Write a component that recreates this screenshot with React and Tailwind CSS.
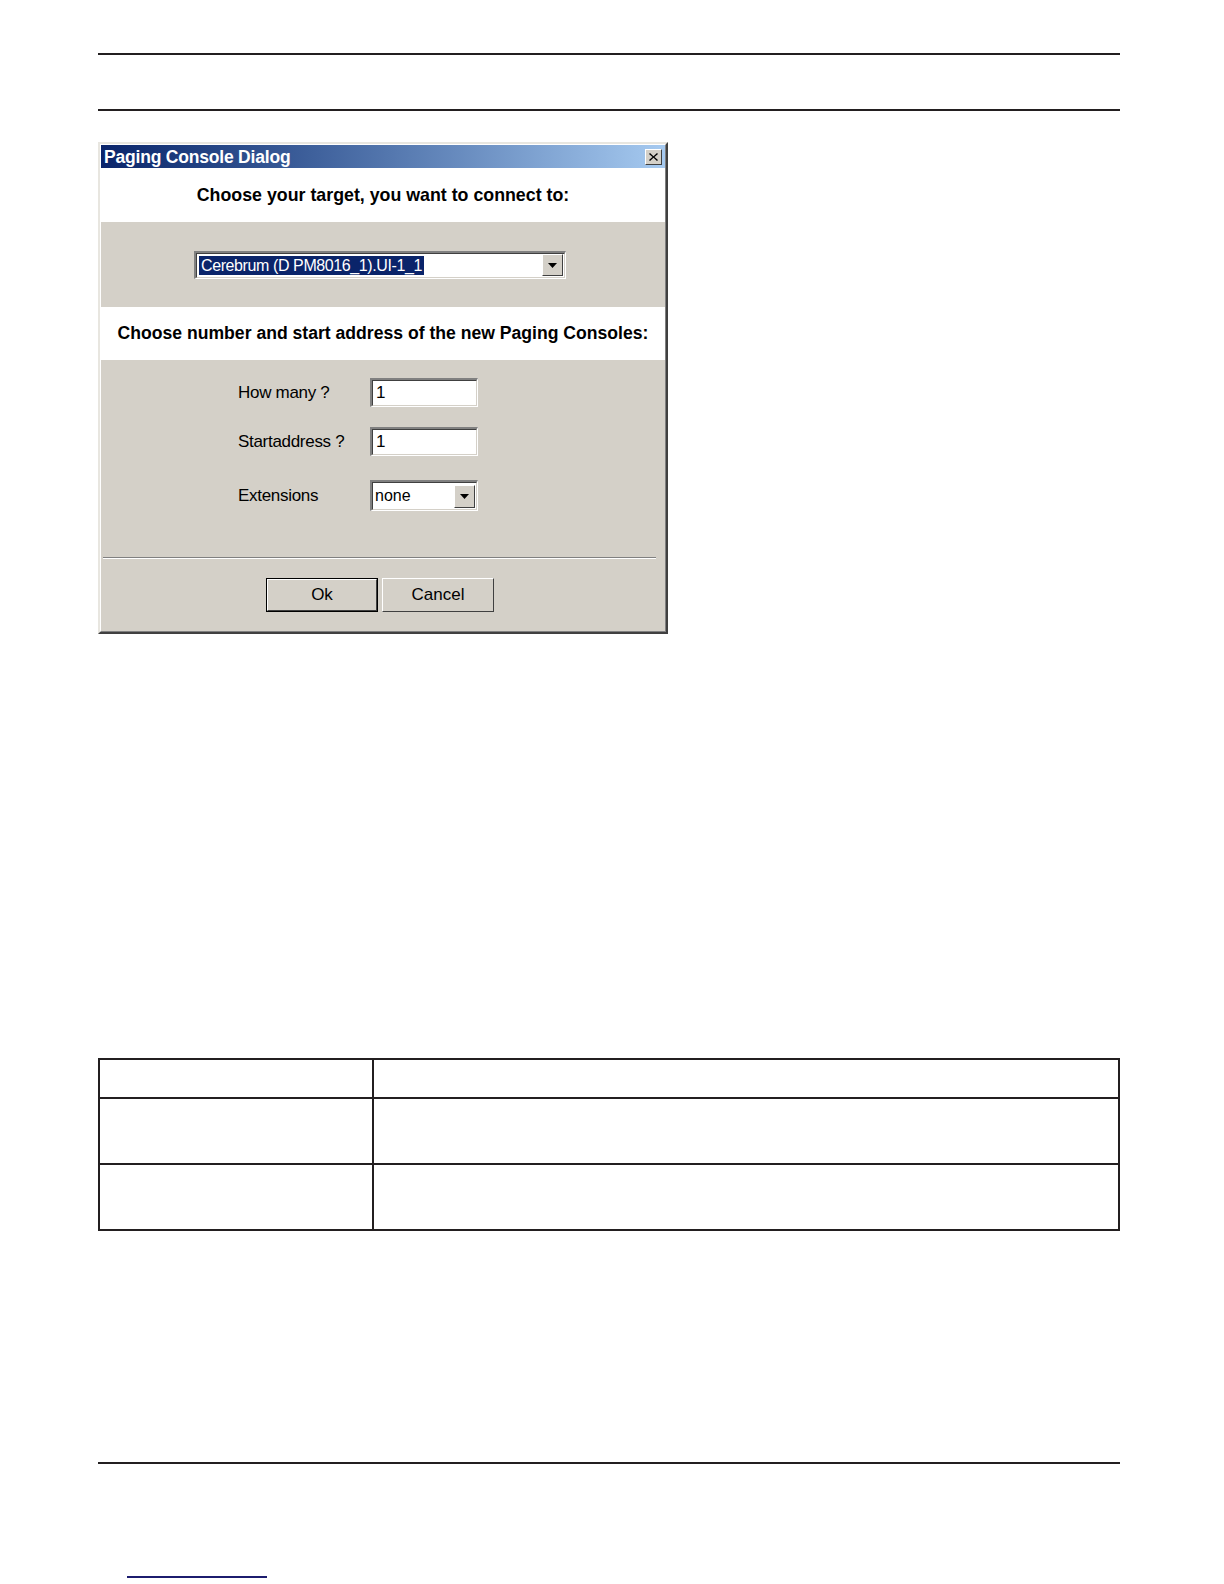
import React from "react";

const font = { fontFamily: '"Liberation Sans", Arial, sans-serif' };

function Field({ children, className = "" }) {
  // sunken win32 edit box
  return (
    <div className={`border-t-2 border-l-2 border-t-[#808080] border-l-[#808080] border-b border-r border-b-white border-r-white ${className}`}>
      <div className="h-full w-full border-t border-l border-t-[#404040] border-l-[#404040] border-b border-r border-b-[#d4d0c8] border-r-[#d4d0c8] bg-white">
        {children}
      </div>
    </div>
  );
}

function DropArrow() {
  return (
    <div className="flex h-full w-[21px] items-center justify-center border border-t-white border-l-white border-b-[#404040] border-r-[#404040] bg-[#d4d0c8]">
      <svg width="9" height="5" viewBox="0 0 9 5">
        <path d="M0 0h9L4.5 5z" fill="#000" />
      </svg>
    </div>
  );
}

function Button({ label, primary }) {
  return (
    <div className={`h-[34px] w-[112px] ${primary ? "border border-black" : ""}`}>
      <div className="flex h-full w-full items-center justify-center border border-t-white border-l-white border-b-[#404040] border-r-[#404040] bg-[#d4d0c8] text-[17px] text-black">
        {label}
      </div>
    </div>
  );
}

function Dialog() {
  return (
    <div className="w-[570px] h-[492px] overflow-hidden border-t-2 border-l-2 border-t-[#e8e6e0] border-l-[#e8e6e0] border-r-2 border-b-2 border-r-[#404040] border-b-[#404040] bg-[#d4d0c8]" style={font}>
      <div className="flex h-full flex-col border border-t-white border-l-white border-r-[#808080] border-b-[#808080]">
        <div className="flex h-[23px] items-center justify-between bg-gradient-to-r from-[#0a246a] to-[#a6caf0] pl-[3px] pr-[3px]">
          <span className="text-[17.5px] font-bold leading-[20px] text-white tracking-[-0.2px]">Paging Console Dialog</span>
          <div className="flex h-[16px] w-[17px] items-center justify-center border border-t-white border-l-white border-b-[#404040] border-r-[#404040] bg-[#d4d0c8]">
            <svg width="9" height="8" viewBox="0 0 9 8">
              <path d="M1 0l3.5 3.3L8 0l1 1-3.5 3 3.5 3-1 1-3.5-3.3L1 8 0 7l3.5-3L0 1z" fill="#000" />
            </svg>
          </div>
        </div>

        <div className="flex h-[54px] items-center justify-center bg-white text-[17.8px] font-bold text-black">
          Choose your target, you want to connect to:
        </div>

        <div className="flex h-[85px] items-center pl-[93px]">
          <Field className="h-[28px] w-[372px]">
            <div className="flex h-full items-center justify-between pl-[2px] pr-[1px]">
              <span className="bg-[#0a246a] px-[2px] text-[16px] leading-[19px] text-white tracking-[-0.4px]">Cerebrum (D PM8016_1).UI-1_1</span>
              <div className="h-[22px]"><DropArrow /></div>
            </div>
          </Field>
        </div>

        <div className="flex h-[53px] items-center justify-center bg-white text-[17.6px] font-bold text-black">
          Choose number and start address of the new Paging Consoles:
        </div>

        <div className="flex flex-1 flex-col">
          <div className="flex flex-col gap-[20px] pl-[137px] pt-[18px]">
            <div className="flex items-center">
              <span className="w-[132px] text-[17px] text-black tracking-[-0.3px]">How many ?</span>
              <Field className="h-[29px] w-[108px]">
                <div className="pl-[3px] text-[17px] leading-[24px] text-black">1</div>
              </Field>
            </div>
            <div className="flex items-center">
              <span className="w-[132px] text-[17px] text-black tracking-[-0.3px]">Startaddress ?</span>
              <Field className="h-[29px] w-[108px]">
                <div className="pl-[3px] text-[17px] leading-[24px] text-black">1</div>
              </Field>
            </div>
            <div className="mt-[4px] flex items-center">
              <span className="w-[132px] text-[17px] text-black tracking-[-0.3px]">Extensions</span>
              <Field className="h-[31px] w-[108px]">
                <div className="flex h-full items-center justify-between pl-[2px] pr-[1px]">
                  <span className="text-[16px] text-black">none</span>
                  <div className="h-[23px]"><DropArrow /></div>
                </div>
              </Field>
            </div>
          </div>

          <div className="mx-[2px] mt-[46px] h-[2px] w-[553px] border-t border-t-[#808080] border-b border-b-white" />

          <div className="flex gap-[4px] pl-[165px] pt-[19px]">
            <Button label="Ok" primary />
            <Button label="Cancel" />
          </div>
        </div>
      </div>
    </div>
  );
}

export default function App() {
  return (
    <div className="relative h-[1584px] w-[1224px] overflow-hidden bg-white px-[98px] pt-[53px]">
      <div className="h-[2px] w-[1022px] bg-[#231f20]" />
      <div className="mt-[54px] h-[2px] w-[1022px] bg-[#231f20]" />
      <div className="mt-[31px]">
        <Dialog />
      </div>

      <table className="mt-[424px] w-[1022px] border-collapse">
        <tbody>
          <tr className="h-[39px]">
            <td className="w-[274px] border-2 border-[#231f20]" />
            <td className="border-2 border-[#231f20]" />
          </tr>
          <tr className="h-[66px]">
            <td className="border-2 border-[#231f20]" />
            <td className="border-2 border-[#231f20]" />
          </tr>
          <tr className="h-[66px]">
            <td className="border-2 border-[#231f20]" />
            <td className="border-2 border-[#231f20]" />
          </tr>
        </tbody>
      </table>

      <div className="mt-[231px] h-[2px] w-[1022px] bg-[#231f20]" />
      <div className="ml-[29px] mt-[112px] h-[2px] w-[140px] bg-[#1c1c6e]" />
    </div>
  );
}
